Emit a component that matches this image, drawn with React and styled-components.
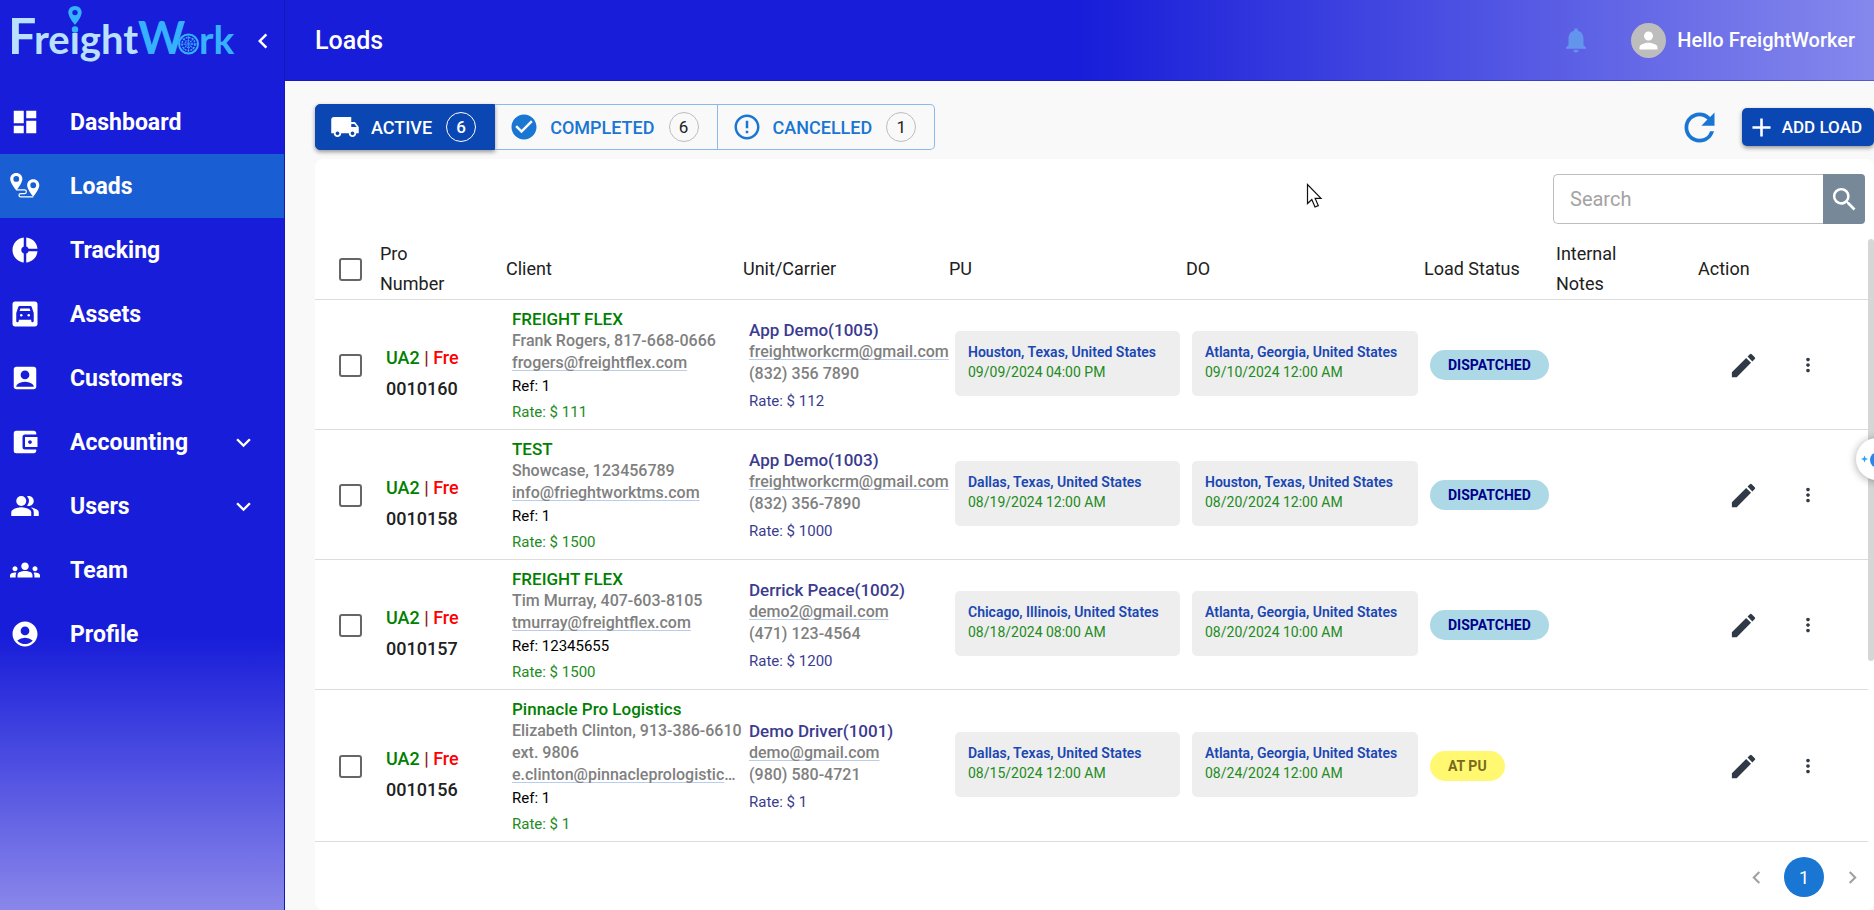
import { useState } from "react";
import styled, { createGlobalStyle } from "styled-components";
import {
  MdAccountBalanceWallet,
  MdAccountBox,
  MdAccountCircle,
  MdAdd,
  MdCheckCircle,
  MdChevronLeft,
  MdChevronRight,
  MdDashboard,
  MdDonutSmall,
  MdEdit,
  MdErrorOutline,
  MdExpandMore,
  MdGarage,
  MdGroups,
  MdLocalShipping,
  MdMoreVert,
  MdNotifications,
  MdPeopleAlt,
  MdPerson,
  MdRefresh,
  MdSearch,
} from "react-icons/md";

const LoadsIcon = () => (
  <svg width="30" height="30" viewBox="0 0 31 31" fill="currentColor">
    <path
      fillRule="evenodd"
      d="M6.5 2C2.900 2 .2 4.700.2 8.200c0 4.300 6.300 11.800 6.300 11.800s6.300-7.500 6.300-11.800C12.800 4.700 10.100 2 6.500 2zm0 3.200a3 3 0 1 1 0 6 3 3 0 0 1 0-6z"
    />
    <path
      fillRule="evenodd"
      d="M24 8.500c-3.600 0-6.300 2.700-6.300 6.200 0 4.300 6.300 11.800 6.300 11.800s6.300-7.500 6.300-11.800c0-3.500-2.700-6.200-6.300-6.200zm0 3.200a3 3 0 1 1 0 6 3 3 0 0 1 0-6z"
    />
    <path
      d="M6.500 19.500H15a1.900 1.900 0 0 1 0 3.800H11a1.700 1.700 0 0 0 0 3.400h13"
      fill="none"
      stroke="currentColor"
      strokeWidth="1.300"
    />
  </svg>
);

const Logo = () => (
  <svg width="240" height="82" viewBox="0 0 240 82" role="img" aria-label="FreightWork">
    <g fontFamily="Lato, sans-serif" fontWeight="700">
      <text y="54" fill="#b9e1ff">
        <tspan x="8" fontSize="50">F</tspan>
        <tspan x="34" fontSize="40">reight</tspan>
      </text>
      <text y="54" fill="#36b1ff">
        <tspan x="138" fontSize="45">W</tspan>
        <tspan x="199" fontSize="39">rk</tspan>
      </text>
    </g>
    <circle cx="75" cy="27.500" r="5" fill="#181dd9" />
    <circle cx="75" cy="29.500" r="3.200" fill="#36b1ff" />
    <path
      fill="#36b1ff"
      fillRule="evenodd"
      d="M75 6c-3.800 0-6.700 2.800-6.700 6.400 0 4.600 6.700 12.400 6.700 12.400s6.700-7.800 6.700-12.400C81.700 8.800 78.800 6 75 6zm0 3.900a2.700 2.700 0 1 1 0 5.400 2.700 2.700 0 0 1 0-5.400z"
    />
    <g fill="none" stroke="#36b1ff">
      <circle cx="188.500" cy="44" r="9.500" strokeWidth="2" />
      <circle cx="188.500" cy="44" r="6.500" strokeWidth="1.500" strokeDasharray="2 1" />
      <circle cx="188.500" cy="44" r="3.500" strokeWidth="1.500" strokeDasharray="1 1" />
      <path d="M180 44h17M188.500 35.500v17M182.500 38l12 12M194.500 38l-12 12" strokeWidth="0.700" />
    </g>
  </svg>
);

const menu = [
  { name: "Dashboard", Icon: MdDashboard },
  { name: "Loads", Icon: LoadsIcon },
  { name: "Tracking", Icon: MdDonutSmall },
  { name: "Assets", Icon: MdGarage },
  { name: "Customers", Icon: MdAccountBox },
  { name: "Accounting", Icon: MdAccountBalanceWallet, nested: true },
  { name: "Users", Icon: MdPeopleAlt, nested: true },
  { name: "Team", Icon: MdGroups },
  { name: "Profile", Icon: MdAccountCircle },
];

const tabs = [
  { name: "ACTIVE", Icon: MdLocalShipping, count: 6 },
  { name: "COMPLETED", Icon: MdCheckCircle, count: 6 },
  { name: "CANCELLED", Icon: MdErrorOutline, count: 1 },
];

const columns = [
  { name: "Pro Number", width: 126, wrap: true },
  { name: "Client", width: 237 },
  { name: "Unit/Carrier", width: 206 },
  { name: "PU", width: 237 },
  { name: "DO", width: 238 },
  { name: "Load Status", width: 132 },
  { name: "Internal Notes", width: 142, wrap: true },
  { name: "Action", width: 170 },
];

const loads = [
  {
    id: "0010160",
    client: { name: "FREIGHT FLEX", contact: "Frank Rogers, 817-668-0666", email: "frogers@freightflex.com", reference: "1", rate: 111 },
    carrier: { name: "App Demo(1005)", email: "freightworkcrm@gmail.com", phone: "(832) 356 7890", rate: 112 },
    pickup: { place: "Houston, Texas, United States", time: "09/09/2024 04:00 PM" },
    dropoff: { place: "Atlanta, Georgia, United States", time: "09/10/2024 12:00 AM" },
    status: "DISPATCHED",
  },
  {
    id: "0010158",
    client: { name: "TEST", contact: "Showcase, 123456789", email: "info@frieghtworktms.com", reference: "1", rate: 1500 },
    carrier: { name: "App Demo(1003)", email: "freightworkcrm@gmail.com", phone: "(832) 356-7890", rate: 1000 },
    pickup: { place: "Dallas, Texas, United States", time: "08/19/2024 12:00 AM" },
    dropoff: { place: "Houston, Texas, United States", time: "08/20/2024 12:00 AM" },
    status: "DISPATCHED",
  },
  {
    id: "0010157",
    client: { name: "FREIGHT FLEX", contact: "Tim Murray, 407-603-8105", email: "tmurray@freightflex.com", reference: "12345655", rate: 1500 },
    carrier: { name: "Derrick Peace(1002)", email: "demo2@gmail.com", phone: "(471) 123-4564", rate: 1200 },
    pickup: { place: "Chicago, Illinois, United States", time: "08/18/2024 08:00 AM" },
    dropoff: { place: "Atlanta, Georgia, United States", time: "08/20/2024 10:00 AM" },
    status: "DISPATCHED",
  },
  {
    id: "0010156",
    client: { name: "Pinnacle Pro Logistics", contact: "Elizabeth Clinton, 913-386-6610 ext. 9806", email: "e.clinton@pinnacleprologistics.com", reference: "1", rate: 1 },
    carrier: { name: "Demo Driver(1001)", email: "demo@gmail.com", phone: "(980) 580-4721", rate: 1 },
    pickup: { place: "Dallas, Texas, United States", time: "08/15/2024 12:00 AM" },
    dropoff: { place: "Atlanta, Georgia, United States", time: "08/24/2024 12:00 AM" },
    status: "AT PU",
  },
];

function App() {
  const [activeTab, setActiveTab] = useState("ACTIVE");
  const [search, setSearch] = useState("");

  return (
    <Layout>
      <GlobalStyle />
      <Sidebar>
        <Brand>
          <Logo />
          <IconButton aria-label="Collapse menu">
            <MdChevronLeft size={30} />
          </IconButton>
        </Brand>
        <nav>
          {menu.map(({ name, Icon, nested }) => (
            <MenuItem key={name} href={`#${name.toLowerCase()}`} $active={name === "Loads"}>
              <Icon size={30} />
              <span>{name}</span>
              {nested && <MdExpandMore size={29} />}
            </MenuItem>
          ))}
        </nav>
      </Sidebar>

      <Page>
        <Header>
          <h1>Loads</h1>
          <User>
            <IconButton $color="#6495ed" aria-label="Notifications">
              <MdNotifications size={30} />
            </IconButton>
            <Avatar>
              <MdPerson size={27} />
            </Avatar>
            <span>Hello FreightWorker</span>
          </User>
        </Header>

        <Content>
          <Toolbar>
            <Tabs>
              {tabs.map(({ name, Icon, count }) => (
                <Tab key={name} $active={activeTab === name} onClick={() => setActiveTab(name)}>
                  <Icon size={30} />
                  <span>{name}</span>
                  <Count $active={activeTab === name}>{count}</Count>
                </Tab>
              ))}
            </Tabs>
            <Actions>
              <IconButton $color="#1976d2" aria-label="Refresh">
                <MdRefresh size={45} />
              </IconButton>
              <AddButton>
                <MdAdd size={31} />
                ADD LOAD
              </AddButton>
            </Actions>
          </Toolbar>

          <Card>
            <SearchBar>
              <input
                type="text"
                aria-label="Search loads"
                placeholder="Search"
                value={search}
                onChange={(e) => setSearch(e.target.value)}
              />
              <button aria-label="Search">
                <MdSearch size={31} />
              </button>
            </SearchBar>

            <TableArea>
              <Table>
                <colgroup>
                  <col width="65" />
                  {columns.map((column) => (
                    <col key={column.name} width={column.width} />
                  ))}
                </colgroup>
                <thead>
                  <tr>
                    <SelectHead>
                      <Checkbox type="checkbox" aria-label="Select all loads" />
                    </SelectHead>
                    {columns.map((column) => (
                      <th key={column.name}>
                        <HeadLabel $wrap={column.wrap}>{column.name}</HeadLabel>
                      </th>
                    ))}
                  </tr>
                </thead>
                <tbody>
                  {loads.map((load) => (
                    <LoadRow key={load.id} load={load} />
                  ))}
                </tbody>
              </Table>
              <ScrollTrack>
                <ScrollThumb />
              </ScrollTrack>
            </TableArea>

            <Pagination aria-label="Pages">
              <PageButton aria-label="Previous page" disabled>
                <MdChevronLeft size={25} />
              </PageButton>
              <PageButton $current>1</PageButton>
              <PageButton aria-label="Next page" disabled>
                <MdChevronRight size={25} />
              </PageButton>
            </Pagination>
          </Card>
        </Content>
      </Page>

      <ChatBubble aria-label="Open assistant">
        <svg width="42" height="42" viewBox="0 0 42 42">
          <path d="M8.500 17.500l1 2.500 2.500 1-2.500 1-1 2.500-1-2.500-2.500-1 2.500-1z" fill="#2aa5f5" />
          <circle cx="22" cy="22" r="8" fill="#2a86ea" />
        </svg>
      </ChatBubble>
      <Pointer width="18" height="26" viewBox="0 0 18 26">
        <path
          d="M1.500 1.500v19l4.300-4 3.200 7.500 3.300-1.400-3.200-7.300h5.900z"
          fill="#fff"
          stroke="#111"
          strokeWidth="1.200"
        />
      </Pointer>
    </Layout>
  );
}

function LoadRow({ load }) {
  const { id, client, carrier, pickup, dropoff, status } = load;

  return (
    <tr>
      <SelectCell>
        <Checkbox type="checkbox" aria-label={`Select load ${id}`} />
      </SelectCell>
      <td>
        <ProNumber>
          <b>UA2</b> | <em>Fre</em>
          <div>{id}</div>
        </ProNumber>
      </td>
      <td>
        <Name $color="#008000">{client.name}</Name>
        <Detail>{client.contact}</Detail>
        <Email href={`mailto:${client.email}`}>{client.email}</Email>
        <Reference>Ref: {client.reference}</Reference>
        <Rate $color="#228b22">Rate: $ {client.rate}</Rate>
      </td>
      <td>
        <Name $color="#3b3b8f">{carrier.name}</Name>
        <Email href={`mailto:${carrier.email}`}>{carrier.email}</Email>
        <Detail>{carrier.phone}</Detail>
        <Rate $color="#3b3b8f">Rate: $ {carrier.rate}</Rate>
      </td>
      <td>
        <Stop>
          <strong>{pickup.place}</strong>
          <span>{pickup.time}</span>
        </Stop>
      </td>
      <td>
        <Stop>
          <strong>{dropoff.place}</strong>
          <span>{dropoff.time}</span>
        </Stop>
      </td>
      <td>
        <Status $waiting={status === "AT PU"}>{status}</Status>
      </td>
      <td></td>
      <td>
        <RowActions>
          <IconButton $color="#303a47" aria-label={`Edit load ${id}`}>
            <MdEdit size={31} />
          </IconButton>
          <IconButton $color="#303a47" aria-label={`More actions for load ${id}`}>
            <MdMoreVert size={22} />
          </IconButton>
        </RowActions>
      </td>
    </tr>
  );
}

const GlobalStyle = createGlobalStyle`
  * {
    box-sizing: border-box;
  }
  body {
    margin: 0;
    background: #f9f9f9;
    font-family: Roboto, "Liberation Sans", sans-serif;
    overflow-x: hidden;
  }
  button, input {
    font-family: inherit;
  }
  button {
    cursor: pointer;
  }
  svg {
    display: block;
    flex-shrink: 0;
  }
`;

const Layout = styled.div`
  display: flex;
  min-height: 100vh;
`;

const Sidebar = styled.aside`
  width: 285px;
  flex-shrink: 0;
  border-right: 1px solid #1519b5;
  background: linear-gradient(to bottom, #181dd9 70%, #8a87ea 100%);
`;

const Brand = styled.div`
  display: flex;
  align-items: center;
  height: 90px;
  padding-bottom: 8px;
  gap: 8px;
`;

const IconButton = styled.button`
  display: flex;
  align-items: center;
  justify-content: center;
  padding: 0;
  border: none;
  background: none;
  color: ${(props) => props.$color || "#fff"};
`;

const MenuItem = styled.a`
  display: flex;
  align-items: center;
  height: 64px;
  padding: 0 26px 0 10px;
  gap: 30px;
  color: #fff;
  background: ${(props) => (props.$active ? "#1a5ed3" : "transparent")};
  font-size: 23px;
  font-weight: 700;
  text-decoration: none;
  span {
    flex: 1;
  }
`;

const Page = styled.div`
  flex: 1;
  min-width: 0;
  display: flex;
  flex-direction: column;
`;

const Header = styled.header`
  display: flex;
  align-items: center;
  justify-content: space-between;
  height: 81px;
  padding: 0 19px 0 30px;
  border-bottom: 1px solid rgba(20, 20, 150, 0.4);
  background: linear-gradient(to right, #181dd9 50%, #8588ec 100%);
  color: #fff;
  h1 {
    margin: 0;
    font-size: 25px;
    font-weight: 500;
  }
`;

const User = styled.div`
  display: flex;
  align-items: center;
  font-size: 20px;
  font-weight: 500;
`;

const Avatar = styled.div`
  display: flex;
  align-items: center;
  justify-content: center;
  width: 35px;
  height: 35px;
  margin: 0 11px 0 40px;
  border-radius: 50%;
  background: #bdbdbd;
`;

const Content = styled.main`
  flex: 1;
  display: flex;
  flex-direction: column;
  padding: 23px 0 0 30px;
`;

const Toolbar = styled.div`
  display: flex;
  align-items: center;
  justify-content: space-between;
  margin-bottom: 9px;
`;

const Tabs = styled.div`
  display: flex;
  border-radius: 5px;
`;

const Tab = styled.button`
  display: flex;
  align-items: center;
  height: 46px;
  padding: 0 18px 0 14px;
  border: 1px solid ${(props) => (props.$active ? "#0b47b3" : "#8cbae8")};
  background: ${(props) => (props.$active ? "#0b47b3" : "transparent")};
  color: ${(props) => (props.$active ? "#fff" : "#1976d2")};
  box-shadow: ${(props) => (props.$active ? "0 2px 4px rgba(0, 0, 0, 0.4)" : "none")};
  font-size: 18px;
  font-weight: 500;
  & + & {
    border-left: none;
  }
  &:first-child {
    border-radius: 5px 0 0 5px;
  }
  &:last-child {
    border-radius: 0 5px 5px 0;
  }
  span {
    margin: 0 14px 0 11px;
  }
`;

const Count = styled.div`
  display: flex;
  align-items: center;
  justify-content: center;
  min-width: 30px;
  height: 30px;
  border: 1px solid ${(props) => (props.$active ? "#fff" : "#bdbdbd")};
  border-radius: 15px;
  color: ${(props) => (props.$active ? "#fff" : "#212121")};
  font-size: 17px;
  font-weight: ${(props) => (props.$active ? 500 : 400)};
`;

const Actions = styled.div`
  display: flex;
  align-items: center;
  gap: 20px;
`;

const AddButton = styled.button`
  display: flex;
  align-items: center;
  height: 38px;
  padding: 0 12px 0 4px;
  gap: 5px;
  border: none;
  border-radius: 5px;
  background: #0b47b3;
  box-shadow: 0 2px 4px rgba(0, 0, 0, 0.4);
  color: #fff;
  font-size: 17px;
  font-weight: 500;
`;

const Card = styled.section`
  flex: 1;
  display: flex;
  flex-direction: column;
  padding-top: 15px;
  border-radius: 8px;
  background: #fff;
`;

const SearchBar = styled.div`
  display: flex;
  align-self: flex-end;
  width: 312px;
  height: 50px;
  margin: 0 9px 15px 0;
  input {
    flex: 1;
    min-width: 0;
    padding: 0 16px;
    border: 1px solid #bdbdbd;
    border-right: none;
    border-radius: 5px 0 0 5px;
    outline: none;
    font-size: 20px;
  }
  input::placeholder {
    color: #a3a3a3;
  }
  button {
    display: flex;
    align-items: center;
    justify-content: center;
    width: 42px;
    padding: 0;
    border: none;
    border-radius: 0 4px 4px 0;
    background: #778899;
    color: #fff;
  }
`;

const TableArea = styled.div`
  display: flex;
`;

const Table = styled.table`
  flex: 1;
  width: 100%;
  min-width: 0;
  table-layout: fixed;
  border-collapse: collapse;
  th {
    height: 60px;
    padding: 0;
    border-bottom: 1px solid #dcdcdc;
    text-align: left;
    color: #212121;
    font-size: 18px;
    font-weight: 400;
    line-height: 30px;
  }
  td {
    padding: 8px 0 7px 6px;
    border-bottom: 1px solid #dcdcdc;
    vertical-align: middle;
  }
`;

const HeadLabel = styled.div`
  width: ${(props) => (props.$wrap ? "min-content" : "auto")};
`;

const SelectHead = styled.th`
  && {
    padding-left: 24px;
  }
`;

const SelectCell = styled.td`
  && {
    padding-left: 24px;
  }
`;

const Checkbox = styled.input`
  appearance: none;
  display: block;
  width: 23px;
  height: 23px;
  margin: 0;
  border: 2px solid #666;
  border-radius: 3px;
  background: #fff;
  &:checked {
    border-color: #1976d2;
    background: #1976d2;
  }
`;

const ProNumber = styled.div`
  padding-top: 16px;
  color: #8b1a1a;
  font-size: 18px;
  font-weight: 500;
  line-height: 31px;
  b {
    color: #008000;
    font-weight: 500;
  }
  em {
    color: #ff0000;
    font-style: normal;
  }
  div {
    color: #212121;
  }
`;

const Name = styled.div`
  color: ${(props) => props.$color};
  font-size: 17px;
  font-weight: 500;
  line-height: 22px;
`;

const Detail = styled.div`
  color: #808080;
  font-size: 16px;
  font-weight: 500;
  line-height: 22px;
`;

const Email = styled.a`
  display: block;
  width: max-content;
  max-width: 226px;
  overflow: hidden;
  color: #808080;
  font-size: 16px;
  font-weight: 500;
  line-height: 22px;
  text-overflow: ellipsis;
  white-space: nowrap;
  text-decoration: underline 1px #b9cdee;
  text-underline-offset: 2px;
  text-decoration-skip-ink: none;
`;

const Reference = styled.div`
  margin-top: 2px;
  color: #000;
  font-size: 15px;
  line-height: 20px;
`;

const Rate = styled.div`
  margin-top: 6px;
  color: ${(props) => props.$color};
  font-size: 15px;
  line-height: 20px;
`;

const Stop = styled.div`
  padding: 11px 0 14px 13px;
  margin: 0 6px 4px 0;
  border-radius: 5px;
  background: #eee;
  font-size: 14px;
  line-height: 20px;
  white-space: nowrap;
  strong {
    display: block;
    color: #1a47b3;
    font-weight: 600;
  }
  span {
    display: block;
    color: #228b22;
  }
`;

const Status = styled.span`
  display: inline-block;
  padding: 0 18px;
  border-radius: 15px;
  background: ${(props) => (props.$waiting ? "#fff870" : "#add8e6")};
  color: ${(props) => (props.$waiting ? "#7a6a20" : "#00008b")};
  font-size: 14px;
  font-weight: 700;
  line-height: 30px;
  white-space: nowrap;
`;

const RowActions = styled.div`
  display: flex;
  align-items: center;
  padding-left: 24px;
  gap: 38px;
`;

const ScrollTrack = styled.div`
  width: 6px;
`;

const ScrollThumb = styled.div`
  height: 70%;
  border-radius: 3px;
  background: #d6d6d6;
`;

const Pagination = styled.nav`
  display: flex;
  align-items: center;
  justify-content: flex-end;
  padding: 15px 2px 13px;
  gap: 8px;
`;

const PageButton = styled.button`
  display: flex;
  align-items: center;
  justify-content: center;
  width: 40px;
  height: 40px;
  padding: 0;
  border: none;
  border-radius: 50%;
  background: ${(props) => (props.$current ? "#1976d2" : "transparent")};
  color: ${(props) => (props.$current ? "#fff" : "#a0a0a0")};
  font-size: 18px;
`;

const ChatBubble = styled.button`
  position: fixed;
  top: 438px;
  right: -24px;
  width: 42px;
  height: 42px;
  padding: 0;
  border: none;
  border-radius: 50%;
  background: #fff;
  box-shadow: 0 1px 8px rgba(0, 0, 0, 0.35);
`;

const Pointer = styled.svg`
  position: absolute;
  top: 183px;
  left: 1306px;
  pointer-events: none;
`;

export default App;
